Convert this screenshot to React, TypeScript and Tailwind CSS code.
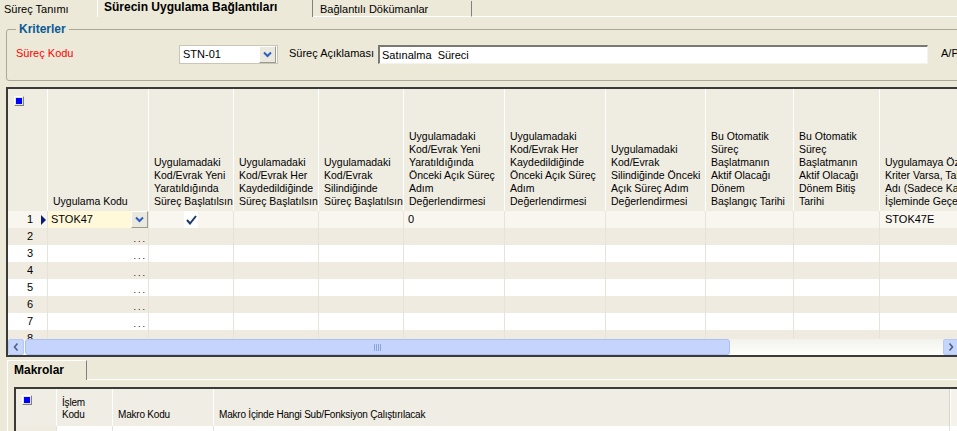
import React from "react";

const colW = [
  "w-[40px]",
  "w-[101px]",
  "w-[85px]",
  "w-[85px]",
  "w-[85px]",
  "w-[101px]",
  "w-[101px]",
  "w-[100px]",
  "w-[88px]",
  "w-[86px]",
  "w-[79px]",
];

const headers: string[][] = [
  [],
  ["Uygulama Kodu"],
  ["Uygulamadaki", "Kod/Evrak Yeni", "Yaratıldığında", "Süreç Başlatılsın"],
  ["Uygulamadaki", "Kod/Evrak Her", "Kaydedildiğinde", "Süreç Başlatılsın"],
  ["Uygulamadaki", "Kod/Evrak", "Silindiğinde", "Süreç Başlatılsın"],
  ["Uygulamadaki", "Kod/Evrak Yeni", "Yaratıldığında", "Önceki Açık Süreç", "Adım", "Değerlendirmesi"],
  ["Uygulamadaki", "Kod/Evrak Her", "Kaydedildiğinde", "Önceki Açık Süreç", "Adım", "Değerlendirmesi"],
  ["Uygulamadaki", "Kod/Evrak", "Silindiğinde Önceki", "Açık Süreç Adım", "Değerlendirmesi"],
  ["Bu Otomatik", "Süreç", "Başlatmanın", "Aktif Olacağı", "Dönem", "Başlangıç Tarihi"],
  ["Bu Otomatik", "Süreç", "Başlatmanın", "Aktif Olacağı", "Dönem Bitiş", "Tarihi"],
  ["Uygulamaya Özel", "Kriter Varsa, Tablo", "Adı (Sadece Kayıt", "İşleminde Geçerli)"],
];

function rowBg(r: number) {
  if (r === 1) return "bg-[#f8f6ef]";
  if (r % 2 === 0) return "bg-[#efebe1]";
  return "bg-white";
}

function Chevron() {
  return (
    <svg width="9" height="7" viewBox="0 0 9 7">
      <path d="M1 1.5 L4.5 5 L8 1.5" fill="none" stroke="#2b5fc4" strokeWidth="2" />
    </svg>
  );
}

function DropBtn() {
  return (
    <div className="flex h-[17px] w-[17px] items-center justify-center border border-t-white border-l-white border-r-[#9d9a8c] border-b-[#9d9a8c] bg-[#ebe8de]">
      <Chevron />
    </div>
  );
}

function CornerIcon() {
  return (
    <div className="flex h-[10px] w-[10px] items-center justify-center border border-t-white border-l-white border-r-[#808080] border-b-[#808080] bg-[#e4e1d6]">
      <div className="h-[6px] w-[6px] bg-[#0000ff]" />
    </div>
  );
}

function Check() {
  return (
    <svg width="11" height="10" viewBox="0 0 11 10">
      <path d="M1 5 L4 8.5 L10 1" fill="none" stroke="#1b3767" strokeWidth="2" />
    </svg>
  );
}

function ArrowL() {
  return (
    <svg width="6" height="8" viewBox="0 0 6 8">
      <path d="M4.5 0.5 L1.5 4 L4.5 7.5" fill="none" stroke="#4d6185" strokeWidth="1.6" />
    </svg>
  );
}

function ArrowR() {
  return (
    <svg width="6" height="8" viewBox="0 0 6 8">
      <path d="M1.5 0.5 L4.5 4 L1.5 7.5" fill="none" stroke="#4d6185" strokeWidth="1.6" />
    </svg>
  );
}

function BodyCell({ r, c }: { r: number; c: number }) {
  const base = `${colW[c]} shrink-0 h-[17px] border-r border-[#e7e3d8] overflow-hidden whitespace-nowrap`;
  if (c === 0) {
    return (
      <div className={`${base} flex items-center justify-end`}>
        <span className="leading-[13px]">{r}</span>
        <span className="flex w-[14px] items-center justify-end pr-[1px]">
          {r === 1 ? (
            <span className="block h-0 w-0 border-y-[5px] border-l-[5px] border-y-transparent border-l-[#0a1e78]" />
          ) : null}
        </span>
      </div>
    );
  }
  if (c === 1) {
    if (r === 1) {
      return (
        <div className={`${base} flex items-center`}>
          <div className="flex h-[17px] flex-1 items-center bg-[#fff8d9] pl-[3px]">STOK47</div>
          <DropBtn />
        </div>
      );
    }
    return (
      <div className={`${base} flex items-end justify-end pr-[1px] pb-[1px]`}>
        <span className="text-[9px] leading-[9px] tracking-[2px]">...</span>
      </div>
    );
  }
  if (c === 2 && r === 1) {
    return (
      <div className={`${base} flex items-center justify-center`}>
        <div className="flex h-[17px] w-[14px] items-center justify-center bg-white">
          <Check />
        </div>
      </div>
    );
  }
  if (c === 5 && r === 1) {
    return <div className={`${base} flex items-center pl-[4px]`}>0</div>;
  }
  if (c === 10 && r === 1) {
    return <div className={`${base} flex items-center pl-[5px]`}>STOK47E</div>;
  }
  return <div className={base} />;
}

export default function App() {
  const rows = [1, 2, 3, 4, 5, 6, 7, 8];
  return (
    <div className="h-[431px] w-[957px] overflow-hidden bg-[#ece9d8] font-['Liberation_Sans',Arial,sans-serif] text-[11px] leading-[13px] text-black">
      {/* top tabs */}
      <div className="flex h-[17px] items-end">
        <div className="h-[16px] w-[97px] shrink-0 pl-[4px] pt-[2px]">Süreç Tanımı</div>
        <div className="h-[17px] w-[216px] shrink-0 border-l border-r border-l-white border-r-[#808080] pl-[6px] pt-[1px] text-[12px] font-bold">
          Sürecin Uygulama Bağlantıları
        </div>
        <div className="h-[16px] w-[159px] shrink-0 border-r border-b border-r-[#808080] border-b-white pl-[7px] pt-[2px]">
          Bağlantılı Dökümanlar
        </div>
        <div className="h-[16px] flex-1 border-b border-white" />
      </div>

      {/* Kriterler */}
      <div className="w-[1000px]">
        <fieldset className="ml-[6px] mt-[6px] w-[990px] rounded-[3px] border border-[#aca899] pb-[16px] pl-[9px]">
          <legend className="px-[3px] text-[12px] font-bold leading-[13px] text-[#0b5a96]">Kriterler</legend>
          <div className="mt-[9px] flex h-[19px] items-start">
            <div className="w-[163px] shrink-0 pt-[2px] text-[#ff0000]">Süreç Kodu</div>
            <div className="flex h-[19px] w-[99px] shrink-0 items-center border border-[#c9c6b8] bg-white pr-[1px]">
              <span className="flex-1 pl-[3px]">STN-01</span>
              <DropBtn />
            </div>
            <div className="ml-[11px] w-[89px] shrink-0 pt-[2px]">Süreç Açıklaması</div>
            <div className="flex h-[19px] w-[550px] shrink-0 items-center border-t-2 border-l-2 border-r border-b border-t-[#7b7a72] border-l-[#7b7a72] border-r-[#f4f3ee] border-b-[#f4f3ee] bg-white pl-[2px]">
              Satınalma&nbsp; Süreci
            </div>
            <div className="ml-[13px] shrink-0 whitespace-nowrap pt-[2px]">A/Pasif</div>
          </div>
        </fieldset>
      </div>

      {/* main grid */}
      <div className="ml-[6px] mt-[6px] w-[953px] border-t-2 border-l-2 border-b-2 border-[#3a3a3a]">
        {/* header */}
        <div className="flex h-[122px] bg-[#efece2]">
          {headers.map((lines, i) => (
            <div
              key={i}
              className={`${colW[i]} shrink-0 overflow-hidden border-r border-white ${
                i === 0 ? "pl-[6px] pt-[7px]" : "flex flex-col justify-end pb-[3px] pl-[5px]"
              } whitespace-nowrap text-[10.5px] leading-[13px]`}
            >
              {i === 0 ? <CornerIcon /> : lines.map((l, k) => <div key={k}>{l}</div>)}
            </div>
          ))}
        </div>
        {/* body */}
        <div className="h-[128px] overflow-hidden">
          {rows.map((r) => (
            <div key={r} className={`flex ${rowBg(r)}`}>
              {colW.map((_, c) => (
                <BodyCell key={c} r={r} c={c} />
              ))}
            </div>
          ))}
        </div>
        {/* horizontal scrollbar */}
        <div className="flex h-[16px] bg-gradient-to-b from-[#f3f3ee] to-[#fdfdfa]">
          <div className="flex h-[16px] w-[16px] shrink-0 items-center justify-center rounded-[2px] border border-[#b7c9f3] bg-[#c5d5fb]">
            <ArrowL />
          </div>
          <div className="flex flex-1 items-center">
            <div className="ml-[1px] flex h-[16px] w-[705px] items-center justify-center rounded-[3px] border border-[#aac0f0] bg-[#c4d4fc]">
              <div className="flex gap-[1px]">
                <div className="h-[7px] w-[1px] bg-[#8ea5dc]" />
                <div className="h-[7px] w-[1px] bg-[#8ea5dc]" />
                <div className="h-[7px] w-[1px] bg-[#8ea5dc]" />
                <div className="h-[7px] w-[1px] bg-[#8ea5dc]" />
              </div>
            </div>
          </div>
          <div className="flex h-[16px] w-[16px] shrink-0 items-center justify-center rounded-[2px] border border-[#b7c9f3] bg-[#c5d5fb]">
            <ArrowR />
          </div>
        </div>
      </div>

      {/* Makrolar tab */}
      <div className="mt-[3px] flex h-[20px]">
        <div className="ml-[7px] h-[20px] w-[80px] shrink-0 border-l border-t border-r border-l-white border-t-white border-r-[#808080] pl-[6px] pt-[3px] text-[12px] font-bold leading-[13px]">
          Makrolar
        </div>
        <div className="h-[20px] flex-1 border-b border-white" />
      </div>
      <div className="ml-[7px] h-[60px] border-l border-white pt-[7px]">
        <div className="ml-[6px] w-[960px] border-t-2 border-l-2 border-[#3a3a3a]">
          <div className="flex h-[37px] bg-[#f0ede4] text-[10px] leading-[12px] tracking-[-0.2px]">
            <div className="w-[41px] shrink-0 border-r border-white pl-[6px] pt-[6px]">
              <CornerIcon />
            </div>
            <div className="flex w-[56px] shrink-0 flex-col justify-end border-r border-white pb-[5px] pl-[5px]">
              <div>İşlem</div>
              <div>Kodu</div>
            </div>
            <div className="flex w-[101px] shrink-0 flex-col justify-end border-r border-white pb-[5px] pl-[5px]">
              <div>Makro Kodu</div>
            </div>
            <div className="flex w-[736px] shrink-0 flex-col justify-end border-r border-[#d8d4c8] pb-[5px] pl-[5px]">
              <div>Makro İçinde Hangi Sub/Fonksiyon Çalıştırılacak</div>
            </div>
            <div className="w-[20px] shrink-0 border-l border-white bg-[#f4f2ea]" />
          </div>
          <div className="flex h-[17px] bg-white">
            <div className="w-[41px] shrink-0 border-r border-[#e7e3d8] bg-[#efebe1]" />
            <div className="w-[56px] shrink-0 border-r border-[#e7e3d8]" />
            <div className="w-[101px] shrink-0 border-r border-[#e7e3d8]" />
            <div className="w-[736px] shrink-0 border-r border-[#e7e3d8]" />
          </div>
        </div>
      </div>
    </div>
  );
}
